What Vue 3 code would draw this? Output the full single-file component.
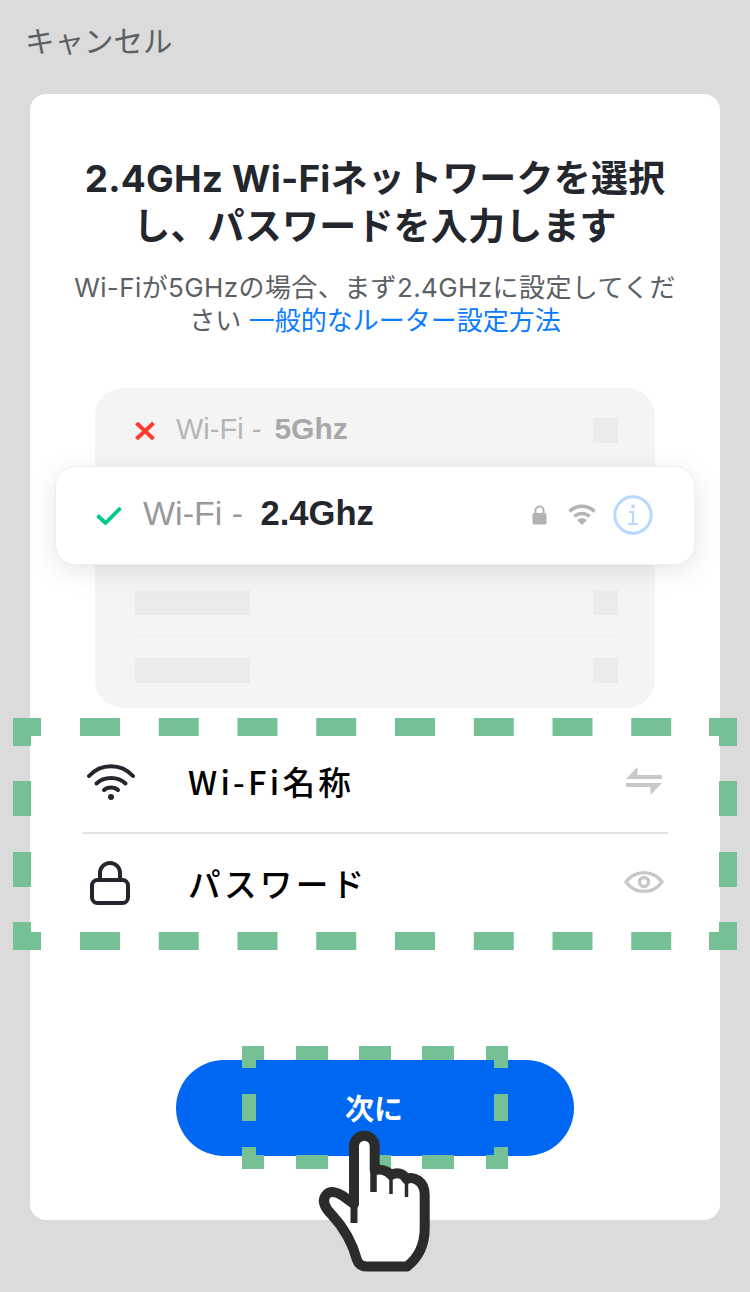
<script setup>
import { computed } from 'vue'

// annotation frames: an L at each corner, evenly spaced dashes between
function dashBox({ x, y, w, h, t, c, hs, hStep, hLen, hN, vs, vStep, vLen, vN }) {
    const r = []
    const right = x + w
    const bottom = y + h
    for (const cy of [y, bottom - t]) {
        r.push([x, cy, c, t], [right - c, cy, c, t])
        for (let i = 0; i < hN; i++) r.push([hs + i * hStep, cy, hLen, t])
    }
    for (const cx of [x, right - t]) {
        r.push([cx, y, t, c], [cx, bottom - c, t, c])
        for (let i = 0; i < vN; i++) r.push([cx, vs + i * vStep, t, vLen])
    }
    return r
}

const dashes = computed(() => [
    ...dashBox({ x: 13, y: 718, w: 724, h: 232, t: 18, c: 28, hs: 80, hStep: 78.75, hLen: 40, hN: 8, vs: 781, vStep: 71, vLen: 35, vN: 2 }),
    ...dashBox({ x: 242, y: 1046, w: 266, h: 123, t: 14, c: 22, hs: 296, hStep: 63, hLen: 32, hN: 3, vs: 1094, vStep: 0, vLen: 27, vN: 1 }),
])
</script>

<template>
    <div class="screen">
        <header class="top">キャンセル</header>

        <main class="card">
            <h1 class="title">2.4GHz Wi-Fiネットワークを選択し、パスワードを入力します</h1>
            <p class="desc">
                <span class="desc-first">Wi-Fiが5GHzの場合、まず2.4GHzに設定してくだ</span>
                <span>さい </span><a class="link">一般的なルーター設定方法</a>
            </p>

            <!-- Router list illustration -->
            <div class="panel">
                <div class="p-row p-row--first">
                    <span class="p-net">
                        <svg class="ico-x" viewBox="0 0 20 18" width="20" height="18">
                            <path d="M1.500 1 18.500 17M18.500 1 1.500 17" fill="none" stroke="#ff3b30" stroke-width="4" />
                        </svg>
                        <span class="p-name">Wi-Fi - </span>
                        <b class="p-band">5Ghz</b>
                    </span>
                    <i class="sq" />
                </div>
                <div class="p-row p-row--skel1">
                    <i class="bar" />
                    <i class="sq" />
                </div>
                <div class="p-line" />
                <div class="p-row p-row--skel2">
                    <i class="bar" />
                    <i class="sq" />
                </div>

                <div class="hi">
                    <svg class="ico-check" viewBox="0 0 26 19" width="26" height="19">
                        <path d="M1.500 9.500 9.500 17 24.500 2" fill="none" stroke="#00c98d" stroke-width="3.800" />
                    </svg>
                    <span class="hi-name">Wi-Fi - </span>
                    <b class="hi-band">2.4Ghz</b>
                    <span class="hi-icons">
                        <svg viewBox="0 0 15 20" width="15" height="20">
                            <path d="M3.500 9V5.500a4 4 0 0 1 8 0V9" fill="none" stroke="#b3b3b3" stroke-width="2" />
                            <rect x="0.500" y="8" width="14" height="11.500" rx="1.500" fill="#b3b3b3" />
                        </svg>
                        <svg class="hi-wifi" viewBox="0 0 28 21" width="28" height="21">
                            <path d="M1.500 7.500C8.500 0.500 19.500 0.500 26.500 7.500" fill="none" stroke="#b3b3b3" stroke-width="3.600" />
                            <path d="M6.500 12.500C10.500 8.500 17.500 8.500 21.500 12.500" fill="none" stroke="#b3b3b3" stroke-width="3.600" />
                            <path d="M9 16 14 21 19 16C16 13.500 12 13.500 9 16Z" fill="#b3b3b3" />
                        </svg>
                        <svg class="hi-info" viewBox="0 0 40 40" width="40" height="40">
                            <circle cx="20" cy="20" r="18.200" fill="none" stroke="#b8d9ff" stroke-width="3" />
                            <circle cx="20" cy="11.500" r="2" fill="#b8d9ff" />
                            <path d="M16 17H20V29M15 29H25" fill="none" stroke="#b8d9ff" stroke-width="2.200" />
                        </svg>
                    </span>
                </div>
            </div>

            <!-- Form -->
            <section class="form">
                <div class="f-row">
                    <svg class="f-ico" viewBox="0 0 48 36" width="48" height="36">
                        <g fill="none" stroke="#23262d" stroke-width="4" stroke-linecap="round">
                            <path d="M2 12C14 -1 34 -1 46 12" />
                            <path d="M9.500 19.500C17 12 31 12 38.500 19.500" />
                            <path d="M17 26C20.500 22.500 27.500 22.500 31 26" />
                        </g>
                        <circle cx="24" cy="33" r="3" fill="#23262d" />
                    </svg>
                    <span class="f-text">Wi-Fi名称</span>
                    <svg class="f-end" viewBox="0 0 38 30" width="38" height="30">
                        <path d="M0 12 11.500 0V8H36V12ZM0 16H36L24.500 28V20H0Z" fill="#c8c8c8" />
                    </svg>
                </div>
                <div class="f-line" />
                <div class="f-row">
                    <svg class="f-ico f-ico--lock" viewBox="0 0 48 44" width="48" height="44">
                        <g fill="none" stroke="#23262d" stroke-width="4">
                            <path d="M14 18V12a10 10 0 0 1 20 0V18" />
                            <rect x="6" y="19" width="36" height="23" rx="5.500" />
                        </g>
                    </svg>
                    <span class="f-text">パスワード</span>
                    <svg class="f-end f-end--eye" viewBox="0 0 40 24" width="40" height="24">
                        <path d="M2 12C11 -0.500 29 -0.500 38 12C29 24.500 11 24.500 2 12Z" fill="none" stroke="#c8c8c8" stroke-width="3.400" />
                        <circle cx="20" cy="12" r="4.500" fill="none" stroke="#c8c8c8" stroke-width="3.400" />
                    </svg>
                </div>
            </section>

            <button class="next">次に</button>
        </main>

        <!-- Tutorial annotation, sits over the page -->
        <svg class="frames" viewBox="0 0 750 1292" width="750" height="1292">
            <rect
                v-for="(d, i) in dashes"
                :key="i"
                :x="d[0]"
                :y="d[1]"
                :width="d[2]"
                :height="d[3]"
                fill="#75c195"
            />
        </svg>

        <svg class="hand" viewBox="0 0 130 160" width="130" height="160">
            <path
                d="M44 26a10.300 10.300 0 0 1 20.700 0V50C70 49 77 50 81 55C87 52 93 53 96.500 59C104 56 114.700 61 114.700 75V108C114.700 125 108 138 97 146.500H57C52 146.500 48.500 144 47 140C43 125 36 110 22 95C14 87 12 80 16 75C20 70 27 72 33 76L44 84Z"
                fill="#fff"
                stroke="#2b2b2b"
                stroke-width="10"
                stroke-linejoin="round"
            />
            <path d="M44 84V103" stroke="#2b2b2b" stroke-width="7" />
            <path d="M63.500 50V72" stroke="#2b2b2b" stroke-width="6.500" />
            <path d="M81 58V74" stroke="#2b2b2b" stroke-width="3.500" />
            <path d="M96.500 62V77" stroke="#2b2b2b" stroke-width="3.500" />
        </svg>
    </div>
</template>

<style scoped>
.screen {
    position: relative;
    height: 1292px;
    overflow: hidden;
    background: #dbdbdb;
    font-family: "Liberation Sans", "Noto Sans CJK JP", sans-serif;
}

.top {
    height: 94px;
    box-sizing: border-box;
    padding: 21px 0 0 25px;
    font-size: 29.500px;
    line-height: 42px;
    color: #5b6064;
}

.card {
    box-sizing: border-box;
    height: 1126px;
    margin: 0 30px;
    padding-top: 61px;
    background: #fff;
    border-radius: 16px;
    text-align: center;
}

.title {
    margin: 0 auto;
    width: 600px;
    font-family: Inter, "Noto Sans CJK JP", sans-serif;
    font-size: 37px;
    line-height: 48px;
    font-weight: 700;
    letter-spacing: 0.200px;
    color: #23262d;
}

.desc {
    margin: 20px auto 0;
    width: 630px;
    font-family: Inter, "Noto Sans CJK JP", sans-serif;
    font-size: 26px;
    line-height: 33px;
    color: #5b6064;
}

.desc-first {
    display: block;
    letter-spacing: 0.400px;
}

.link {
    color: #0a7cff;
}

/* Illustration */
.panel {
    position: relative;
    box-sizing: border-box;
    width: 560px;
    height: 320px;
    margin: 51px 0 0 65px;
    padding: 30px 37px 0 40px;
    background: #f4f4f4;
    border-radius: 28px;
    text-align: left;
}

.p-row {
    display: flex;
    align-items: center;
    justify-content: space-between;
    height: 25px;
}

.p-row--skel1 {
    margin-top: 147px;
}

.p-row--skel2 {
    margin-top: 21px;
}

.p-net {
    display: flex;
    align-items: center;
    font-size: 29px;
    color: #b5b5b5;
}

.ico-x {
    margin-right: 21px;
}

.p-name {
    white-space: pre;
    padding-bottom: 3px;
}

.p-band {
    margin-left: 5px;
    padding-bottom: 3px;
    font-size: 30px;
    color: #a8a8a8;
}

.sq {
    width: 25px;
    height: 25px;
    background: #ebebeb;
}

.bar {
    width: 115px;
    height: 25px;
    background: #ebebeb;
}

.p-line {
    height: 1px;
    margin: 21px 0 0 -2px;
    background: #ededed;
}

.hi {
    position: absolute;
    top: 78px;
    left: -40px;
    box-sizing: border-box;
    width: 640px;
    height: 99px;
    display: flex;
    align-items: center;
    padding: 0 41px 0 40px;
    background: #fff;
    border: 1px solid #eeeeee;
    border-radius: 20px;
    box-shadow: 0 6px 26px rgba(0, 0, 0, 0.1);
    font-size: 34px;
}

.ico-check {
    margin-right: 21px;
}

.hi-name {
    white-space: pre;
    padding-bottom: 4px;
    color: #999;
}

.hi-band {
    margin-left: 8px;
    padding-bottom: 4px;
    font-size: 34.600px;
    color: #23262d;
}

.hi-icons {
    display: flex;
    align-items: center;
    margin: -2px 0 0 auto;
}

.hi-wifi {
    margin-left: 21px;
}

.hi-info {
    margin-left: 17px;
}

/* Form */
.form {
    width: 586px;
    margin: 24px 0 0 52px;
    text-align: left;
}

.f-row {
    display: flex;
    align-items: center;
    height: 100px;
}

.f-ico {
    flex: 0 0 48px;
    margin: 0 53px 0 5px;
}

.f-ico--lock {
    margin-left: 4px;
    margin-right: 54px;
    margin-top: -3px;
}

.f-text {
    flex: 1;
    padding-bottom: 3px;
    font-family: "Liberation Sans Narrow", "Noto Sans CJK JP", sans-serif;
    font-size: 32.600px;
    font-weight: 500;
    letter-spacing: 3.300px;
    color: #000;
}

.f-end {
    margin-right: 4px;
}

.f-end--eye {
    margin-top: -4px;
}

.f-line {
    height: 2px;
    background: #e4e4e4;
}

.next {
    display: block;
    width: 398px;
    height: 96px;
    margin: 126px 0 0 146px;
    padding: 0 2px 3px 0;
    border: none;
    border-radius: 48px;
    background: #0067f2;
    color: #fff;
    font-family: inherit;
    font-size: 29px;
    font-weight: 700;
}

.frames,
.hand {
    position: absolute;
    top: 0;
    left: 0;
    pointer-events: none;
}

.hand {
    top: 1120px;
    left: 310px;
}
</style>
